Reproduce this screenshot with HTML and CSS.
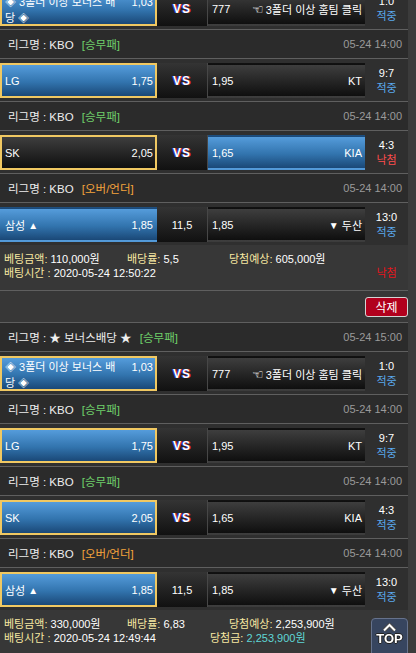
FILE: index.html
```html
<!DOCTYPE html>
<html lang="ko">
<head>
  <meta charset="UTF-8">
  <meta name="viewport" content="width=device-width, initial-scale=1.0">
  <title>베팅내역</title>
  <link rel="stylesheet" href="styles.css">
</head>
<body>
  <div class="wrap">
    <!-- 첫번째 배팅 -->
    <div class="slip">
      <div class="game">
        <div class="pick sel mine bonus"><span class="name">◈ 3폴더 이상 보너스 배당 ◈</span><span class="odds">1,03</span></div>
        <div class="mid"><span class="vs">VS</span></div>
        <div class="pick away"><span class="odds">777</span><span class="name"><span class="hand">☜</span>3폴더 이상 홈팀 클릭</span></div>
        <div class="result"><b>1:0</b><span class="hit">적중</span></div>
      </div>
      <div class="league"><span>리그명 : KBO <em class="type win">[승무패]</em></span><span class="date">05-24 14:00</span></div>
      <div class="game">
        <div class="pick sel mine"><span class="name">LG</span><span class="odds">1,75</span></div>
        <div class="mid"><span class="vs">VS</span></div>
        <div class="pick away"><span class="odds">1,95</span><span class="name">KT</span></div>
        <div class="result"><b>9:7</b><span class="hit">적중</span></div>
      </div>
      <div class="league"><span>리그명 : KBO <em class="type win">[승무패]</em></span><span class="date">05-24 14:00</span></div>
      <div class="game">
        <div class="pick mine"><span class="name">SK</span><span class="odds">2,05</span></div>
        <div class="mid"><span class="vs">VS</span></div>
        <div class="pick away sel"><span class="odds">1,65</span><span class="name">KIA</span></div>
        <div class="result"><b>4:3</b><span class="miss">낙첨</span></div>
      </div>
      <div class="league"><span>리그명 : KBO <em class="type ou">[오버/언더]</em></span><span class="date">05-24 14:00</span></div>
      <div class="game last">
        <div class="pick sel"><span class="name">삼성 <i class="tri">▲</i></span><span class="odds">1,85</span></div>
        <div class="mid">11,5</div>
        <div class="pick away"><span class="odds">1,85</span><span class="name"><i class="tri">▼</i> 두산</span></div>
        <div class="result"><b>13:0</b><span class="hit">적중</span></div>
      </div>
      <div class="bet-info">
        <div class="info-line">
          <span class="c1"><span class="lbl">베팅금액:</span> 110,000원</span>
          <span class="c2"><span class="lbl">배당률:</span> 5,5</span>
          <span><span class="lbl">당첨예상:</span> 605,000원</span>
        </div>
        <div class="info-line">
          <span class="c-time"><span class="lbl">배팅시간 :</span> 2020-05-24 12:50:22</span>
          <span class="state lost">낙첨</span>
        </div>
      </div>
      <div class="tools"><button class="del">삭제</button></div>
    </div>

    <!-- 두번째 배팅 -->
    <div class="slip">
      <div class="league"><span>리그명 : ★ 보너스배당 ★ <em class="type win">[승무패]</em></span><span class="date">05-24 15:00</span></div>
      <div class="game">
        <div class="pick sel mine bonus"><span class="name">◈ 3폴더 이상 보너스 배당 ◈</span><span class="odds">1,03</span></div>
        <div class="mid"><span class="vs">VS</span></div>
        <div class="pick away"><span class="odds">777</span><span class="name"><span class="hand">☜</span>3폴더 이상 홈팀 클릭</span></div>
        <div class="result"><b>1:0</b><span class="hit">적중</span></div>
      </div>
      <div class="league"><span>리그명 : KBO <em class="type win">[승무패]</em></span><span class="date">05-24 14:00</span></div>
      <div class="game">
        <div class="pick sel mine"><span class="name">LG</span><span class="odds">1,75</span></div>
        <div class="mid"><span class="vs">VS</span></div>
        <div class="pick away"><span class="odds">1,95</span><span class="name">KT</span></div>
        <div class="result"><b>9:7</b><span class="hit">적중</span></div>
      </div>
      <div class="league"><span>리그명 : KBO <em class="type win">[승무패]</em></span><span class="date">05-24 14:00</span></div>
      <div class="game">
        <div class="pick sel mine"><span class="name">SK</span><span class="odds">2,05</span></div>
        <div class="mid"><span class="vs">VS</span></div>
        <div class="pick away"><span class="odds">1,65</span><span class="name">KIA</span></div>
        <div class="result"><b>4:3</b><span class="hit">적중</span></div>
      </div>
      <div class="league"><span>리그명 : KBO <em class="type ou">[오버/언더]</em></span><span class="date">05-24 14:00</span></div>
      <div class="game last">
        <div class="pick sel mine"><span class="name">삼성 <i class="tri">▲</i></span><span class="odds">1,85</span></div>
        <div class="mid">11,5</div>
        <div class="pick away"><span class="odds">1,85</span><span class="name"><i class="tri">▼</i> 두산</span></div>
        <div class="result"><b>13:0</b><span class="hit">적중</span></div>
      </div>
      <div class="bet-info">
        <div class="info-line">
          <span class="c1"><span class="lbl">베팅금액:</span> 330,000원</span>
          <span class="c2"><span class="lbl">배당률:</span> 6,83</span>
          <span><span class="lbl">당첨예상:</span> 2,253,900원</span>
        </div>
        <div class="info-line">
          <span class="c-time2"><span class="lbl">배팅시간 :</span> 2020-05-24 12:49:44</span>
          <span><span class="lbl">당첨금:</span> <span class="won">2,253,900원</span></span>
          <span class="state hit">적중</span>
        </div>
      </div>
    </div>
  </div>

  <a class="to-top" href="#">
    <svg width="15" height="9" viewBox="0 0 15 9"><path d="M2 7.5 L7.5 2 L13 7.5" fill="none" stroke="#4a4a4a" stroke-width="4"/><path d="M2 7.5 L7.5 2 L13 7.5" fill="none" stroke="#fff" stroke-width="2"/></svg>
    <span>TOP</span>
  </a>
</body>
</html>
```

FILE: styles.css
```css
* {
    box-sizing: border-box;
}

html, body {
    overflow: hidden;
}

body {
    margin: 0;
    background: #3b3b3b;
    color: #fff;
    font-family: "Liberation Sans", "Noto Sans CJK KR", sans-serif;
    font-size: 11px;
}

/* 화면이 조금 스크롤된 상태 */
.wrap {
    width: 408px;
    margin-top: -13px;
    background: #333;
}

.league {
    height: 29px;
    display: flex;
    justify-content: space-between;
    align-items: center;
    padding: 0 6px 0 8px;
    background: #2b2b2b;
    border-bottom: 1px solid #5f5f5f;
    color: #eee;
    font-size: 11.5px;
}

.type {
    font-style: normal;
    margin-left: 5px;
}
.type.win { color: #6fcf6a; }
.type.ou { color: #f5a33c; }

.date {
    color: #9a9a9a;
    font-size: 11px;
}

.game {
    display: grid;
    grid-template-columns: 157px 51px 157px 43px;
    align-items: center;
    padding: 4px 0 3px;
    background: #2f2f2f;
    border-bottom: 1px solid #5f5f5f;
}
.game.last {
    border-bottom: 0;
}

.pick {
    height: 35px;
    display: flex;
    align-items: center;
    justify-content: space-between;
    gap: 6px;
    padding: 0 2px 0 3px;
    border: 2px solid transparent;
    background: linear-gradient(#3e3e3e, #0f0f0f);
    white-space: nowrap;
}
.pick.away {
    padding: 0 1px 0 2px;
}
.pick.sel {
    background: linear-gradient(#559cdb, #3274ae 55%, #1a4877);
}
.pick.mine {
    border-color: #f0c862;
}
.pick.bonus {
    align-items: flex-start;
    white-space: normal;
    line-height: 16px;
    padding-top: 1px;
}
.pick.bonus .name {
    width: 112px;
    word-break: break-all;
}
.pick.bonus .odds {
    flex-shrink: 0;
}

.hand {
    font-family: "DejaVu Sans", sans-serif;
    font-size: 13px;
    margin-right: 2px;
}
.tri {
    font-style: normal;
    font-size: 10px;
    vertical-align: 1px;
}

.mid {
    height: 35px;
    display: flex;
    align-items: center;
    justify-content: center;
    background: linear-gradient(#343434, #111);
    border-right: 1px solid #474747;
}
.vs {
    font-weight: bold;
    font-size: 12px;
    letter-spacing: 1px;
    text-shadow: -1px 0 #2b3fd0, 1px 0 #d62828;
}

.result {
    display: flex;
    flex-direction: column;
    align-items: center;
    line-height: 15px;
}
.result b {
    font-weight: normal;
}
.hit { color: #5aa8ec; }
.miss { color: #ff4d4d; }

.bet-info {
    padding: 7px 0 10px 4px;
    background: #373737;
    border-bottom: 1px solid #5f5f5f;
    line-height: 14px;
}
.info-line {
    display: flex;
}
.c1 { width: 123px; }
.c2 { width: 102px; }
.c-time { flex: 1; }
.c-time2 { width: 206px; }
.lbl { color: #f7e8a2; }
.won { color: #5fd6d6; }
.state {
    width: 43px;
    margin-left: auto;
    text-align: center;
}
.state.lost { color: #e8141b; }

.tools {
    display: flex;
    justify-content: flex-end;
    padding: 6px 0 5px;
    background: #373737;
    border-bottom: 1px solid #5f5f5f;
}
.del {
    width: 43px;
    height: 20px;
    padding: 0;
    background: #b1001d;
    color: #fff;
    border: 1px solid #d4d4d4;
    border-radius: 3px;
    font-family: "Noto Sans CJK KR", sans-serif;
    font-size: 12px;
    line-height: 18px;
}

.to-top {
    position: fixed;
    right: 8px;
    bottom: -5px;
    width: 37px;
    height: 40px;
    display: flex;
    flex-direction: column;
    align-items: center;
    padding-top: 4px;
    background: rgba(55, 70, 98, 0.93);
    border: 1px solid #66728c;
    border-radius: 4px;
    text-decoration: none;
    color: #fff;
}
.to-top span {
    font-weight: bold;
    font-size: 13px;
    line-height: 13px;
    margin-top: 0;
    text-shadow: 1px 0 #222, -1px 0 #222, 0 1px #222, 0 -1px #222;
}
```
